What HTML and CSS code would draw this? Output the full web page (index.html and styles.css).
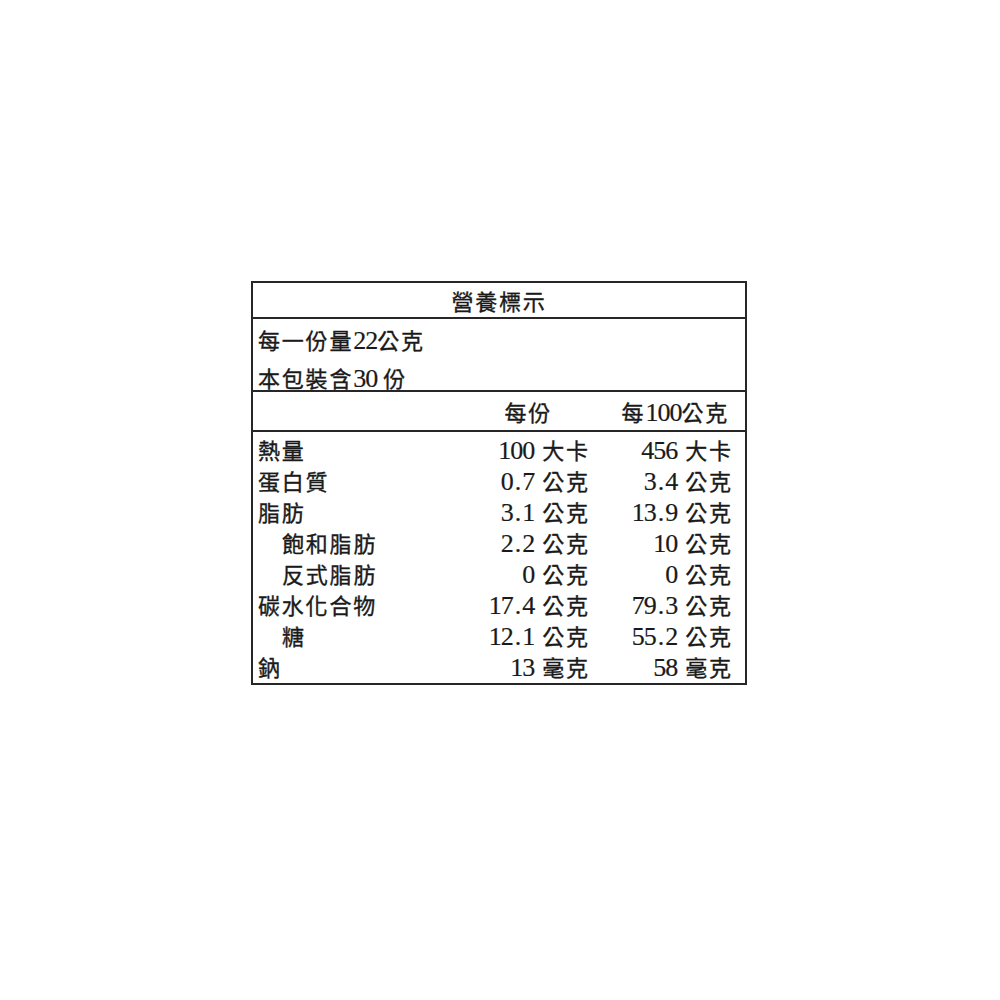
FILE: index.html
```html
<!DOCTYPE html>
<html lang="zh-Hant">
<head>
<meta charset="utf-8">
<title>營養標示</title>
<link rel="stylesheet" href="styles.css">
</head>
<body>
<div class="page">
  <div class="label">
    <div class="title">營養標示</div>
    <div class="serving">
      <div class="line">每一份量<span class="num">22</span>公克</div>
      <div class="line">本包裝含<span class="num">30</span><span class="gap"></span>份</div>
    </div>
    <div class="head grid">
      <div></div>
      <div class="h1">每份</div>
      <div class="h2">每<span class="num">100</span>公克</div>
    </div>
    <div class="data">
      <div class="row grid"><div class="name">熱量</div><div class="val"><span class="num">100</span><span class="unit">大卡</span></div><div class="val"><span class="num">456</span><span class="unit">大卡</span></div></div>
      <div class="row grid"><div class="name">蛋白質</div><div class="val"><span class="num">0<span class="dot">.</span>7</span><span class="unit">公克</span></div><div class="val"><span class="num">3<span class="dot">.</span>4</span><span class="unit">公克</span></div></div>
      <div class="row grid"><div class="name">脂肪</div><div class="val"><span class="num">3<span class="dot">.</span>1</span><span class="unit">公克</span></div><div class="val"><span class="num">13<span class="dot">.</span>9</span><span class="unit">公克</span></div></div>
      <div class="row grid"><div class="name sub">飽和脂肪</div><div class="val"><span class="num">2<span class="dot">.</span>2</span><span class="unit">公克</span></div><div class="val"><span class="num">10</span><span class="unit">公克</span></div></div>
      <div class="row grid"><div class="name sub">反式脂肪</div><div class="val"><span class="num">0</span><span class="unit">公克</span></div><div class="val"><span class="num">0</span><span class="unit">公克</span></div></div>
      <div class="row grid"><div class="name">碳水化合物</div><div class="val"><span class="num">17<span class="dot">.</span>4</span><span class="unit">公克</span></div><div class="val"><span class="num">79<span class="dot">.</span>3</span><span class="unit">公克</span></div></div>
      <div class="row grid"><div class="name sub">糖</div><div class="val"><span class="num">12<span class="dot">.</span>1</span><span class="unit">公克</span></div><div class="val"><span class="num">55<span class="dot">.</span>2</span><span class="unit">公克</span></div></div>
      <div class="row grid"><div class="name">鈉</div><div class="val"><span class="num">13</span><span class="unit">毫克</span></div><div class="val"><span class="num">58</span><span class="unit">毫克</span></div></div>
    </div>
  </div>
</div>
</body>
</html>
```

FILE: styles.css
```css
* {
  box-sizing: border-box;
}

html, body {
  margin: 0;
  padding: 0;
  background: #ffffff;
}

.page {
  padding: 281px 0 0 251px;
}

.label {
  width: 496px;
  border: 2px solid #262626;
  color: #1a1a1a;
  font-family: "Noto Sans CJK TC", "Noto Sans CJK SC", sans-serif;
  font-size: 22px;
  letter-spacing: 1.8px;
  -webkit-text-stroke: 0.35px #1a1a1a;
}

.num {
  font-family: "Liberation Serif", serif;
  font-size: 26px;
  letter-spacing: -1px;
  -webkit-text-stroke: 0.2px #1a1a1a;
}

.dot {
  display: inline-block;
  padding: 0 2px 0 2px;
}

.title {
  height: 36px;
  border-bottom: 2px solid #262626;
  text-align: center;
  line-height: 34px;
}

.serving {
  height: 73px;
  border-bottom: 2px solid #262626;
  padding: 4px 5px 0 5px;
  display: flex;
  flex-direction: column;
  gap: 6px;
}

.serving .line {
  line-height: 32px;
  height: 32px;
  white-space: nowrap;
}

.gap {
  display: inline-block;
  width: 6px;
}

.grid {
  display: grid;
  grid-template-columns: 1fr 150px 143px;
  padding: 0 14px 0 5px;
}

.head {
  height: 40px;
  border-bottom: 2px solid #262626;
  line-height: 38px;
}

.h1 {
  text-align: right;
  padding-right: 36px;
}

.h2 {
  text-align: right;
  padding-right: 2px;
}

.data {
  height: 251px;
  padding-top: 2px;
}

.row {
  height: 31px;
  line-height: 31px;
  white-space: nowrap;
}

.name.sub {
  padding-left: 24px;
}

.val {
  display: flex;
  justify-content: flex-end;
  align-items: baseline;
}

.unit {
  margin-left: 8px;
  margin-right: -1.8px;
}
```
